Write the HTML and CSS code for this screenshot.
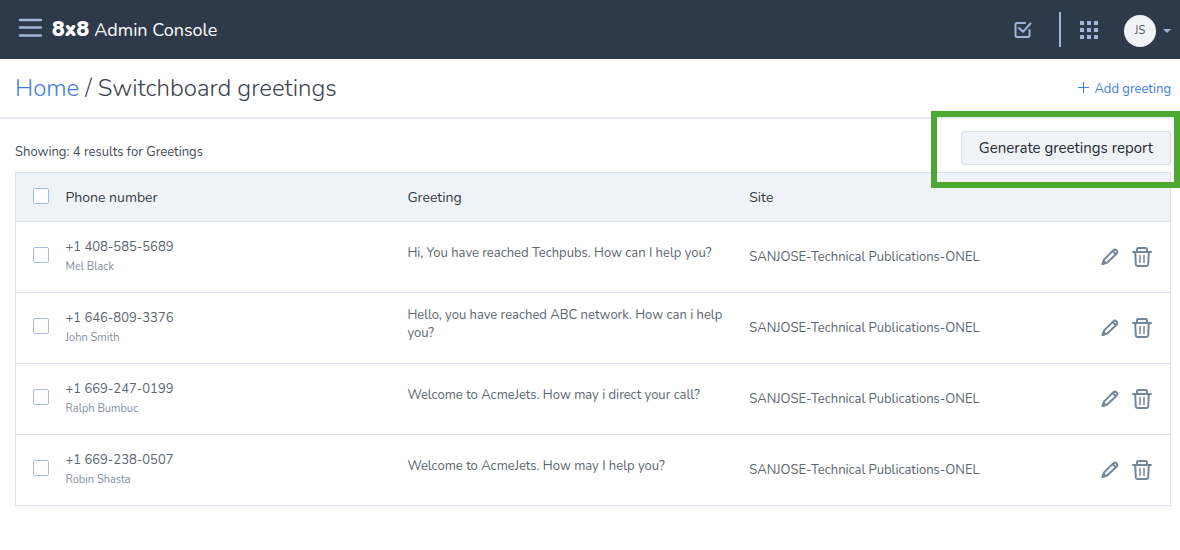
FILE: index.html
```html
<!DOCTYPE html>
<html lang="en">
<head>
<meta charset="utf-8">
<meta name="viewport" content="width=device-width, initial-scale=1">
<title>8x8 Admin Console</title>
<link rel="stylesheet" href="styles.css">
</head>
<body>
<svg class="sprite" aria-hidden="true">
  <symbol id="pencil" viewBox="0 0 18 18"><path d="M1.500 16L3.200 11.400L12.200 2.400Q13.800 1 15.400 2.200Q17 3.700 15.700 5.500L6.200 14.500ZM11.500 3L15 6.300"/><path fill="currentColor" d="M1.500 16L2.600 13L4.500 14.900Z"/></symbol>
  <symbol id="trash" viewBox="0 0 20 22"><path d="M1 6H19M5 6V3.300Q5 2 6.300 2H13.700Q15 2 15 3.300V6M3.200 6L3.800 18.500Q3.900 20 5.400 20H14.600Q16.100 20 16.200 18.500L16.800 6"/><path stroke-width="1.500" d="M8 9.500V16.500M12 9.500V16.500"/></symbol>
</svg>
<header class="topbar">
  <button class="icon-button menu" aria-label="Menu"><svg width="24" height="20" viewBox="0 0 24 20"><path d="M2 2H23M2 9.500H23M2 17.500H23"/></svg></button>
  <div class="brand"><span class="logo">8x8</span><span class="product">Admin Console</span></div>
  <div class="tools">
    <button class="icon-button" aria-label="Tasks"><svg width="18" height="18" viewBox="0 0 18 18"><path d="M11 2H3Q1.500 2 1.500 3.500V14.500Q1.500 16 3 16H14Q15.500 16 15.500 14.500V9M5 7L9 10.800L16.500 2.500"/></svg></button>
    <span class="divider"></span>
    <button class="icon-button apps" aria-label="Apps"><svg width="20" height="20" viewBox="0 0 20 20"><path d="M1 1h4v4h-4zM8 1h4v4h-4zM15 1h4v4h-4zM1 8h4v4h-4zM8 8h4v4h-4zM15 8h4v4h-4zM1 15h4v4h-4zM8 15h4v4h-4zM15 15h4v4h-4z"/></svg></button>
    <button class="icon-button account" aria-label="Account JS"><span class="avatar">JS</span><svg width="8" height="4" viewBox="0 0 8 4"><path d="M0 0H8L4 4Z"/></svg></button>
  </div>
</header>
<div class="titlebar">
  <h1 class="title"><a href="#">Home</a> / Switchboard greetings</h1>
  <a class="add" href="#"><svg width="11" height="11" viewBox="0 0 11 11"><path d="M5.500 0V11M0 5.500H11"/></svg>Add greeting</a>
</div>
<main class="content">
  <div class="summary">
    <p class="count">Showing: 4 results for Greetings</p>
    <div class="highlight"><button class="report">Generate greetings report</button></div>
  </div>
  <table class="greetings">
    <thead>
      <tr><th class="col-check"><input type="checkbox" aria-label="Select all"></th><th class="col-text">Phone number</th><th class="col-text">Greeting</th><th>Site</th><th class="col-actions"></th></tr>
    </thead>
    <tbody>
      <tr><td><input type="checkbox" aria-label="Select Mel Black"></td><td><div class="phone">+1 408-585-5689</div><div class="name">Mel Black</div></td><td><div class="message">Hi, You have reached Techpubs. How can I help you?</div></td><td>SANJOSE-Technical Publications-ONEL</td><td><div class="actions"><button class="icon-button" aria-label="Edit"><svg width="18" height="18"><use href="#pencil"/></svg></button><button class="icon-button" aria-label="Delete"><svg width="20" height="22"><use href="#trash"/></svg></button></div></td></tr>
      <tr><td><input type="checkbox" aria-label="Select John Smith"></td><td><div class="phone">+1 646-809-3376</div><div class="name">John Smith</div></td><td><div class="message">Hello, you have reached ABC network. How can i help you?</div></td><td>SANJOSE-Technical Publications-ONEL</td><td><div class="actions"><button class="icon-button" aria-label="Edit"><svg width="18" height="18"><use href="#pencil"/></svg></button><button class="icon-button" aria-label="Delete"><svg width="20" height="22"><use href="#trash"/></svg></button></div></td></tr>
      <tr><td><input type="checkbox" aria-label="Select Ralph Bumbuc"></td><td><div class="phone">+1 669-247-0199</div><div class="name">Ralph Bumbuc</div></td><td><div class="message">Welcome to AcmeJets. How may i direct your call?</div></td><td>SANJOSE-Technical Publications-ONEL</td><td><div class="actions"><button class="icon-button" aria-label="Edit"><svg width="18" height="18"><use href="#pencil"/></svg></button><button class="icon-button" aria-label="Delete"><svg width="20" height="22"><use href="#trash"/></svg></button></div></td></tr>
      <tr><td><input type="checkbox" aria-label="Select Robin Shasta"></td><td><div class="phone">+1 669-238-0507</div><div class="name">Robin Shasta</div></td><td><div class="message">Welcome to AcmeJets. How may I help you?</div></td><td>SANJOSE-Technical Publications-ONEL</td><td><div class="actions"><button class="icon-button" aria-label="Edit"><svg width="18" height="18"><use href="#pencil"/></svg></button><button class="icon-button" aria-label="Delete"><svg width="20" height="22"><use href="#trash"/></svg></button></div></td></tr>
    </tbody>
  </table>
</main>
</body>
</html>
```

FILE: styles.css
```css
* { box-sizing: border-box; }
body { margin: 0; background: #fff; color: #5c6670; font: 13px/18px Nunito, Lato, sans-serif; }
a { color: #3f7de0; text-decoration: none; }
button { font: inherit; cursor: pointer; }
svg { display: block; fill: none; }
.sprite { display: none; }
.icon-button { display: flex; align-items: center; border: 0; padding: 0; background: none; color: #a3b5d6; }
.icon-button svg { stroke: currentColor; stroke-width: 2; stroke-linejoin: round; stroke-linecap: round; }

.topbar { display: flex; align-items: center; height: 59px; padding: 0 9px 0 18px; background: #2e3a49; color: #fff; }
.menu { padding-bottom: 4px; }
.icon-button.menu svg { stroke-width: 2.5; }
.brand { display: flex; align-items: baseline; gap: 5px; margin-left: 10px; padding-bottom: 1px; line-height: 24px; }
.logo { font-size: 21px; font-weight: 900; }
.product { font-size: 18px; }
.tools { display: flex; align-items: center; margin-left: auto; }
.divider { width: 2px; height: 35px; margin: 0 18px 0 27px; background: #a3b5d6; }
.icon-button.apps svg, .icon-button.account svg { fill: #a3b5d6; stroke: none; }
.account { gap: 7px; margin-left: 25px; padding-top: 3px; }
.avatar { width: 32px; height: 32px; border-radius: 50%; background: #eff3f8; color: #4a4f57; font-size: 11px; line-height: 31px; text-align: center; }

.titlebar { display: flex; align-items: center; justify-content: space-between; height: 60px; padding: 0 9px 0 15px; border-bottom: 2px solid #e4e9f3; }
.title { margin: 0; color: #3c444e; font-size: 24px; line-height: 32px; font-weight: 300; }
.add { display: flex; align-items: center; gap: 5px; padding-top: 2px; }
.add svg { margin-bottom: 4px; stroke: currentColor; stroke-width: 1; }

.content { padding: 12px 9px 20px 15px; }
.summary { display: flex; align-items: center; justify-content: space-between; margin-bottom: 7px; }
.count { margin: 7px 0 0; color: #454d57; }
.highlight { position: relative; }
.highlight::after { content: ""; position: absolute; inset: -20px -9px -23px -30px; border: 6px solid #4da832; pointer-events: none; }
.report { display: block; height: 34px; padding: 0 17px; border: 1px solid #d8dfec; border-radius: 3px; background: #eff3f8; color: #252b33; font-size: 15px; line-height: 30px; }

.greetings { width: 100%; table-layout: fixed; border-collapse: collapse; border: 1px solid #dae2ee; }
.greetings tr { border-bottom: 1px solid #dae2ee; }
.greetings th { height: 49px; padding: 2px 0 0; background: #eff3f8; color: #343b45; font-size: 14px; font-weight: 400; text-align: left; }
.greetings td { height: 71px; padding: 0; }
.col-check { width: 50px; }
.col-text { width: 29.6%; }
.col-actions { width: 100px; }
.greetings input { appearance: none; display: block; width: 16px; height: 16px; margin: 0 0 4px 17px; border: 1px solid #a9bbdc; border-radius: 2px; background: #fff; }
.phone { font-size: 13px; line-height: 20px; }
.name { color: #8490a0; font-size: 11px; line-height: 20px; }
.message { padding: 0 24px 8px 0; }
.actions { display: flex; align-items: center; justify-content: flex-end; gap: 13px; padding-right: 18px; }
.actions .icon-button { color: #74879a; }
```
